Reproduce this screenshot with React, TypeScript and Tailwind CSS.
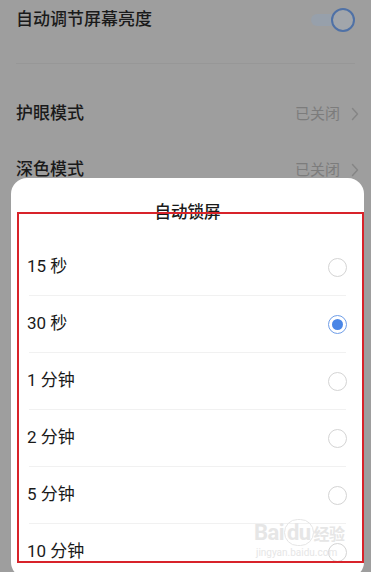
import React, { useState } from 'react';

const options = ['15 秒', '30 秒', '1 分钟', '2 分钟', '5 分钟', '10 分钟'];

const Chevron: React.FC = () => (
    <svg width="8" height="14" viewBox="0 0 8 14" fill="none" className="ml-[11px]">
        <path d="M1.5 1.5 L6.5 7 L1.5 12.5" stroke="#858585" strokeWidth="1.4" strokeLinecap="round" strokeLinejoin="round" />
    </svg>
);

const Radio: React.FC<{ checked: boolean }> = ({ checked }) =>
    checked ? (
        <span className="flex h-[19px] w-[19px] items-center justify-center rounded-full border-[1.5px] border-[#6f9ee8]">
            <span className="h-[11px] w-[11px] rounded-full bg-[#4a86e6]" />
        </span>
    ) : (
        <span className="h-[19px] w-[19px] rounded-full border-[1.5px] border-[#d4d4d4]" />
    );

const App: React.FC = () => {
    const [selected, setSelected] = useState(1);

    return (
        <div
            className="relative h-[572px] w-[371px] overflow-hidden bg-[#9e9e9e] text-[#1a1a1a]"
            style={{ fontFamily: 'Roboto, "Noto Sans CJK SC", sans-serif' }}
        >
            {/* dimmed settings page */}
            <div className="flex h-[40px] items-center justify-between pl-[16px] pr-[16px] text-[17px] font-medium">
                <span>自动调节屏幕亮度</span>
                <div className="relative flex h-[24px] w-[44px] items-center">
                    <div className="h-[12px] w-[28px] rounded-full bg-[#97a0ab]" />
                    <div className="absolute right-0 h-[24px] w-[24px] rounded-full border-[2.5px] border-[#4f71a6] bg-[#a2a6ab]" />
                </div>
            </div>
            <div className="mx-[16px] mt-[23px] h-px bg-[#979797]" />
            <div className="mt-[30px] flex h-[40px] items-center justify-between pl-[16px] pr-[12px] text-[17px] font-medium">
                <span>护眼模式</span>
                <div className="flex items-center text-[15px] font-normal text-[#7c7c7c]">
                    已关闭
                    <Chevron />
                </div>
            </div>
            <div className="mt-[16px] flex h-[40px] items-center justify-between pl-[16px] pr-[12px] text-[17px] font-medium">
                <span>深色模式</span>
                <div className="flex items-center text-[15px] font-normal text-[#7c7c7c]">
                    已关闭
                    <Chevron />
                </div>
            </div>

            {/* bottom sheet */}
            <div className="absolute left-[11px] top-[178px] w-[353px] h-[400px] rounded-[16px] bg-white">
                <div className="pt-[24px] text-center text-[16.5px] font-medium leading-[22px] text-[#1a1a1a]">自动锁屏</div>
                <div className="mt-[15px]">
                    {options.map((o, i) => (
                        <div key={o}>
                            {i > 0 && <div className="mx-[18px] h-px bg-[#f1f1f1]" />}
                            <button
                                onClick={() => setSelected(i)}
                                className="flex h-[56px] w-full items-center justify-between pl-[16px] pr-[17px] text-[17px] text-[#1a1a1a]"
                            >
                                <span>{o}</span>
                                <Radio checked={selected === i} />
                            </button>
                        </div>
                    ))}
                </div>
            </div>

            {/* watermark */}
            <div className="pointer-events-none absolute left-[254px] top-[521px] text-[#e6e6e6]">
                <div className="text-[22px] font-bold leading-[24px] tracking-tight">
                    Bai<span className="rounded-full border border-[#e6e6e6] px-[2px]">du</span>
                    <span className="text-[16px]">经验</span>
                </div>
                <div className="text-[10px] leading-[12px] pl-[2px]">jingyan.baidu.com</div>
            </div>

            {/* annotation box */}
            <div className="pointer-events-none absolute left-[17px] top-[212px] h-[351px] w-[347px] border-2 border-[#d8232a]" />
        </div>
    );
};

export default App;
